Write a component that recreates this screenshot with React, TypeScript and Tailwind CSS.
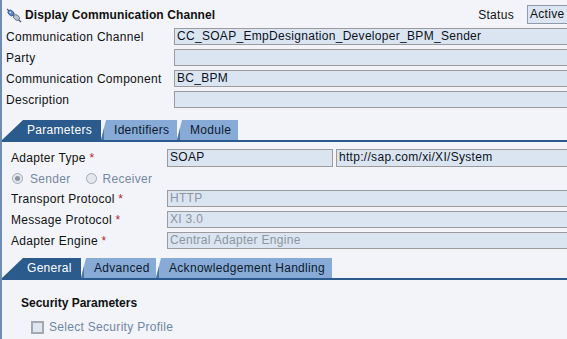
import React from 'react';

const headerFields = [
  { label: 'Communication Channel', value: 'CC_SOAP_EmpDesignation_Developer_BPM_Sender' },
  { label: 'Party', value: '' },
  { label: 'Communication Component', value: 'BC_BPM' },
  { label: 'Description', value: '' },
];

const protocolFields = [
  { label: 'Transport Protocol', value: 'HTTP' },
  { label: 'Message Protocol', value: 'XI 3.0' },
  { label: 'Adapter Engine', value: 'Central Adapter Engine' },
];

function ChannelIcon() {
  return (
    <svg width="16" height="16" viewBox="0 0 16 16">
      <line x1="1" y1="2" x2="15" y2="15" stroke="#4a5a70" strokeWidth="1.2" />
      <ellipse cx="5" cy="6" rx="3.4" ry="2.4" transform="rotate(40 5 6)" fill="#5d86c8" stroke="#2b4f86" strokeWidth="0.8" />
      <ellipse cx="10.5" cy="10.5" rx="3.4" ry="2.4" transform="rotate(40 10.5 10.5)" fill="#b9c3cf" stroke="#5a6676" strokeWidth="0.8" />
      <circle cx="4.3" cy="5.3" r="0.9" fill="#e6eefb" />
    </svg>
  );
}

function Field({ value, muted, className }: { value: string; muted?: boolean; className: string }) {
  return (
    <div
      className={`h-[17px] shrink-0 border border-[#9b9b9b] bg-[#dbe5f2] px-[2px] leading-[15px] whitespace-nowrap ${
        muted ? 'text-[#8c949e]' : 'text-[#0b1220]'
      } ${className}`}
    >
      {value}
    </div>
  );
}

function Tab({ label, active, first, width }: { label: string; active?: boolean; first?: boolean; width: string }) {
  return (
    <div
      className={`relative h-[20px] shrink-0 leading-[20px] ${width} ${
        active ? 'bg-[#2b5a8c] text-white' : 'bg-[#87aad7] text-[#0d1a2e]'
      } ${first ? '[clip-path:polygon(21px_0,100%_0,100%_100%,0_100%)] pl-[25px]' : '[clip-path:polygon(5px_0,100%_0,100%_100%,0_100%)] pl-[13px]'}`}
    >
      {!first && !active && <span className="absolute left-0 bottom-0 h-[13px] w-[3px] bg-[#4e76a4]" />}
      {label}
    </div>
  );
}

export default function App() {
  return (
    <div className="w-[567px] h-[339px] overflow-hidden bg-[#f2f4f9] border-l-2 border-[#6f8db3] font-['Liberation_Sans',Arial,sans-serif] text-[12px] tracking-[0.3px] text-[#111]">
      {/* Header */}
      <div className="flex items-center h-[24px] pt-[5px]">
        <div className="ml-[4px] w-[16px] h-[16px]">
          <ChannelIcon />
        </div>
        <span className="ml-[3px] font-bold tracking-[0.1px]">Display Communication Channel</span>
        <span className="ml-auto mr-[13px]">Status</span>
        <div className="h-[19px] w-[60px] mr-[-20px] border border-[#8f9aab] bg-[#dce6f3] px-[2px] leading-[17px]">Active</div>
      </div>

      <div className="flex flex-col gap-[4px] mt-[4px]">
        {headerFields.map((f) => (
          <div key={f.label} className="flex items-center h-[17px]">
            <span className="ml-[4px] w-[168px] shrink-0 whitespace-nowrap">{f.label}</span>
            <Field value={f.value} className="w-[420px]" />
          </div>
        ))}
      </div>

      {/* Tabs 1 */}
      <div className="mt-[12px] flex border-b-2 border-[#2b5a8c]">
        <Tab label="Parameters" active first width="w-[99px]" />
        <Tab label="Identifiers" width="w-[76px]" />
        <Tab label="Module" width="w-[61px]" />
      </div>

      <div className="pl-[9px]">
        <div className="flex items-center mt-[7px] h-[18px]">
          <span className="w-[156px] shrink-0">
            Adapter Type <span className="text-[#b3262f]">*</span>
          </span>
          <Field value="SOAP" className="w-[166px] h-[18px]" />
          <Field value="http://sap.com/xi/XI/System" className="ml-[3px] w-[240px] h-[18px]" />
        </div>

        <div className="flex items-center h-[23px] text-[#7488a2]">
          <span className="ml-[1px] w-[11px] h-[11px] rounded-full border border-[#a3a9b2] bg-[#e4e8ee] flex items-center justify-center">
            <span className="w-[5px] h-[5px] rounded-full bg-[#8a939e]" />
          </span>
          <span className="ml-[7px]">Sender</span>
          <span className="ml-[15px] w-[11px] h-[11px] rounded-full border border-[#a3a9b2] bg-[#e4e8ee]" />
          <span className="ml-[6px]">Receiver</span>
        </div>

        <div className="flex flex-col gap-[4px]">
          {protocolFields.map((f) => (
            <div key={f.label} className="flex items-center h-[17px]">
              <span className="w-[156px] shrink-0">
                {f.label} <span className="text-[#b3262f]">*</span>
              </span>
              <Field value={f.value} muted className="w-[420px]" />
            </div>
          ))}
        </div>
      </div>

      {/* Tabs 2 */}
      <div className="mt-[9px] flex border-b-2 border-[#2b5a8c]">
        <Tab label="General" active first width="w-[79px]" />
        <Tab label="Advanced" width="w-[75px]" />
        <Tab label="Acknowledgement Handling" width="w-[176px]" />
      </div>

      <div className="pl-[19px]">
        <div className="mt-[14px] font-bold tracking-[0px]">Security Parameters</div>
        <div className="flex items-center mt-[6px] text-[#6f86a4]">
          <span className="ml-[10px] w-[13px] h-[13px] border-2 border-[#a4a9b0] bg-[#dfe6ef]" />
          <span className="ml-[5px]">Select Security Profile</span>
        </div>
      </div>
    </div>
  );
}
